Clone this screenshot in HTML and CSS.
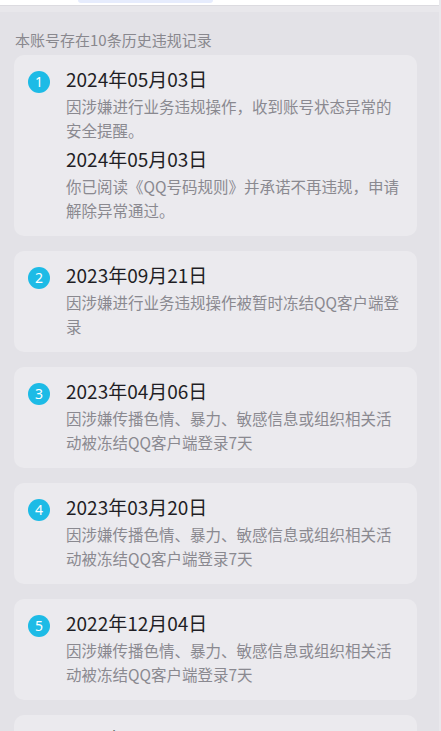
FILE: index.html
```html
<!DOCTYPE html>
<html lang="zh-CN">
<head>
<meta charset="utf-8">
<title>历史违规记录</title>
<link rel="stylesheet" href="styles.css">
</head>
<body>
<div class="page">
  <div class="topbar"><div class="tab-ind"></div></div>
  <div class="band"></div>
  <main class="content">
    <p class="summary">本账号存在10条历史违规记录</p>
    <ul class="records">
      <li class="card">
        <span class="num">1</span>
        <div class="body">
          <div class="entry">
            <div class="date">2024年05月03日</div>
            <div class="desc">因涉嫌进行业务违规操作，收到账号状态异常的安全提醒。</div>
          </div>
          <div class="entry">
            <div class="date">2024年05月03日</div>
            <div class="desc">你已阅读《QQ号码规则》并承诺不再违规，申请解除异常通过。</div>
          </div>
        </div>
      </li>
      <li class="card">
        <span class="num">2</span>
        <div class="body">
          <div class="entry">
            <div class="date">2023年09月21日</div>
            <div class="desc">因涉嫌进行业务违规操作被暂时冻结QQ客户端登录</div>
          </div>
        </div>
      </li>
      <li class="card">
        <span class="num">3</span>
        <div class="body">
          <div class="entry">
            <div class="date">2023年04月06日</div>
            <div class="desc">因涉嫌传播色情、暴力、敏感信息或组织相关活动被冻结QQ客户端登录7天</div>
          </div>
        </div>
      </li>
      <li class="card">
        <span class="num">4</span>
        <div class="body">
          <div class="entry">
            <div class="date">2023年03月20日</div>
            <div class="desc">因涉嫌传播色情、暴力、敏感信息或组织相关活动被冻结QQ客户端登录7天</div>
          </div>
        </div>
      </li>
      <li class="card">
        <span class="num">5</span>
        <div class="body">
          <div class="entry">
            <div class="date">2022年12月04日</div>
            <div class="desc">因涉嫌传播色情、暴力、敏感信息或组织相关活动被冻结QQ客户端登录7天</div>
          </div>
        </div>
      </li>
      <li class="card">
        <span class="num">6</span>
        <div class="body">
          <div class="entry">
            <div class="date">2022年08月26日</div>
            <div class="desc">因涉嫌传播色情、暴力、敏感信息或组织相关活动被冻结QQ客户端登录7天</div>
          </div>
        </div>
      </li>
    </ul>
  </main>
</div>
</body>
</html>
```
FILE: styles.css
```css
html, body {
  margin: 0;
  padding: 0;
}
body {
  background: #e3e2e7;
  font-family: "Noto Sans CJK SC", "Noto Sans", sans-serif;
  overflow: hidden;
}
.page {
  width: 439px;
  height: 731px;
  background: #e3e2e7;
  border-right: 2px solid #e9e8ec;
  overflow: hidden;
}
.topbar {
  height: 5px;
  background: #ffffff;
  border-bottom: 1px solid #dcdbe0;
}
.tab-ind {
  margin-left: 78px;
  width: 135px;
  height: 3px;
  background: #e6ecfd;
  border-radius: 0 0 6px 6px;
}
.band {
  height: 6px;
  background: #e8e7eb;
}
.content {
  margin-left: 14px;
  width: 403px;
}
.summary {
  margin: 16px 0 3px 1px;
  font-size: 15px;
  line-height: 24px;
  color: #89888e;
}
.records {
  list-style: none;
  margin: 0;
  padding: 0;
  display: flex;
  flex-direction: column;
  gap: 15px;
}
.card {
  display: flex;
  align-items: flex-start;
  gap: 16px;
  background: #ebeaee;
  border-radius: 10px;
  padding: 9px 15px 14px 14px;
}
.num {
  flex: none;
  width: 22px;
  height: 22px;
  margin-top: 7px;
  border-radius: 50%;
  background: #1dbbe6;
  color: #ffffff;
  font-family: "Noto Sans", sans-serif;
  font-size: 14px;
  line-height: 22px;
  text-align: center;
}
.body {
  flex: none;
  width: 336px;
  display: flex;
  flex-direction: column;
  gap: 2px;
}
.date {
  font-size: 19px;
  line-height: 30px;
  color: #1f1e25;
}
.desc {
  font-size: 15.5px;
  line-height: 24px;
  color: #8a8990;
}
```
